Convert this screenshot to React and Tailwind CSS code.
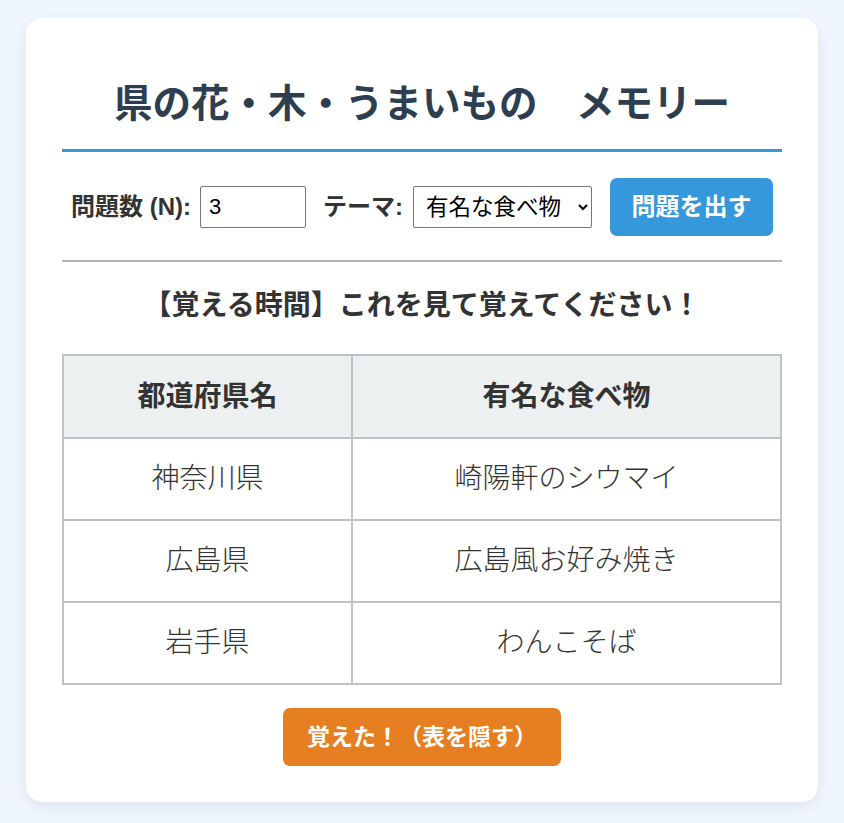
import React from 'react'

const rows = [
  ['神奈川県', '崎陽軒のシウマイ'],
  ['広島県', '広島風お好み焼き'],
  ['岩手県', 'わんこそば'],
]

const font = { fontFamily: '"Liberation Sans", "Noto Sans CJK JP", sans-serif' }

export default function App() {
  return (
    <div className="min-h-[823px] bg-[#eff6ff] pt-[18px] pb-[21px]" style={font}>
      <div className="mx-auto w-[792px] rounded-[16px] bg-white px-[36px] pt-[36px] pb-[36px] shadow-[0_4px_14px_rgba(0,0,0,0.08)]">
        <h1 className="mt-[27px] border-b-[3px] border-[#3498db] pb-[22px] text-center text-[38.5px] font-bold leading-[46px] text-[#2c3e50]">
          県の花・木・うまいもの　メモリー
        </h1>

        <div className="mt-[26px] flex items-center justify-center text-[#333]">
          <label className="text-[24px] font-bold">問題数 (N):</label>
          <input
            type="text"
            defaultValue="3"
            className="ml-[9px] h-[42px] w-[106px] rounded-[2px] border border-[#767676] px-[8px] text-[22px] leading-[40px] text-black"
          />
          <label className="ml-[17px] text-[24px] font-bold">テーマ:</label>
          <select className="ml-[10px] h-[42px] w-[179px] rounded-[2px] border border-[#767676] bg-white pl-[8px] text-[22.5px] text-black">
            <option>有名な食べ物</option>
          </select>
          <button className="ml-[18px] h-[58px] w-[163px] rounded-[7px] bg-[#3498db] text-[24px] font-bold text-white">
            問題を出す
          </button>
        </div>

        <div className="mt-[24px] h-[2px] bg-[#b4b4b4]" />

        <h2 className="mt-[26px] text-center text-[28px] font-bold leading-[35px] text-[#333]">
          【覚える時間】これを見て覚えてください！
        </h2>

        <table className="mt-[31px] w-full table-fixed border-collapse text-[28px] text-[#333]">
          <colgroup>
            <col className="w-[289px]" />
            <col />
          </colgroup>
          <thead>
            <tr className="bg-[#ecf0f1]">
              <th className="border-2 border-[#bdc3c7] py-[21px] font-bold leading-[39px]">都道府県名</th>
              <th className="border-2 border-[#bdc3c7] py-[21px] font-bold leading-[39px]">有名な食べ物</th>
            </tr>
          </thead>
          <tbody>
            {rows.map(([pref, food]) => (
              <tr key={pref}>
                <td className="border-2 border-[#bdc3c7] py-[20px] text-center font-light leading-[40px]">{pref}</td>
                <td className="border-2 border-[#bdc3c7] py-[20px] text-center font-light leading-[40px]">{food}</td>
              </tr>
            ))}
          </tbody>
        </table>

        <div className="mt-[23px] flex justify-center">
          <button className="h-[58px] w-[278px] rounded-[7px] bg-[#e67e22] text-[23px] font-bold text-white">
            覚えた！（表を隠す）
          </button>
        </div>
      </div>
    </div>
  )
}
